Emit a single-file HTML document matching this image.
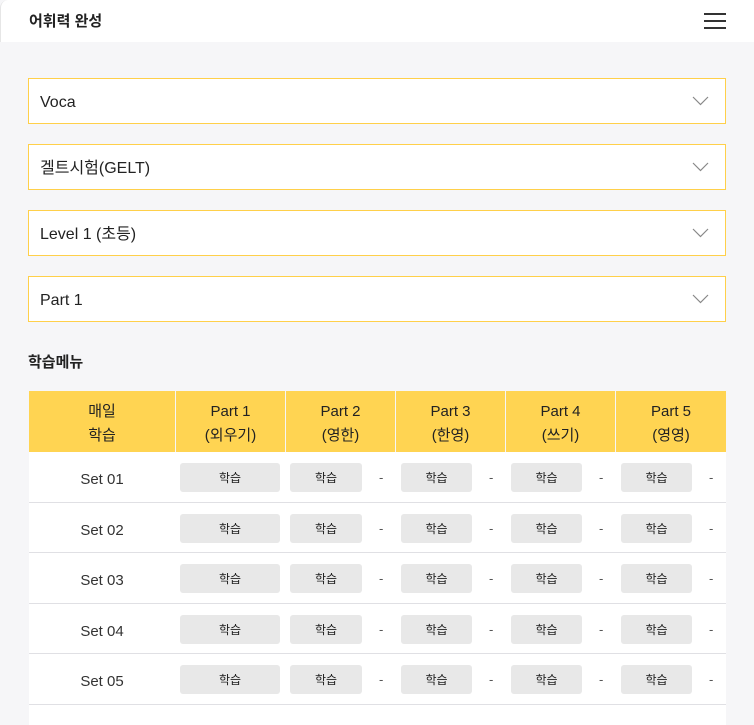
<!DOCTYPE html>
<html><head><meta charset="utf-8"><style>
*{margin:0;padding:0;box-sizing:border-box}
body{width:754px;height:711px;overflow:hidden;background:#f6f6f8;font-family:"Liberation Sans","Noto Sans CJK KR",sans-serif;color:#222;position:relative}
.hdr{position:absolute;left:0;top:0;width:754px;height:42px;background:#fff;border-left:1px solid #e6e6e6;border-top-left-radius:8px}
.hdr .t{position:absolute;left:28px;top:12px;font-size:15px;line-height:20px;font-weight:bold;color:#222}
.hb{position:absolute;left:703px;width:22px;height:2px;background:#333}
.sel{position:absolute;left:28px;width:698px;height:46px;background:#fff;border:1px solid #ffd04a}
.sel span{position:absolute;left:11px;top:14px;font-size:16px;line-height:20px;height:20px;color:#222}
.sel svg{position:absolute;right:16px;top:17px}
.lbl{position:absolute;left:28px;top:353px;font-size:15px;line-height:20px;font-weight:bold}
.th{position:absolute;top:391px;height:61px;background:#ffd452;font-size:15px;text-align:center;line-height:24px;padding-top:9px;color:#222}
.row{position:absolute;left:29px;width:697px;background:#fff;border-bottom:1px solid #e0e0e4}
.row .s{position:absolute;left:0;width:146px;top:18px;text-align:center;font-size:15px;line-height:20px;color:#333}
.b{position:absolute;top:11px;height:29px;background:#e8e8e8;border-radius:3px;font-size:12px;text-align:center;line-height:30px;color:#222}
.d{position:absolute;top:16px;font-size:13px;line-height:20px;color:#555}
</style></head><body>
<div class="hdr"><div class="t">어휘력 완성</div>
<div class="hb" style="top:13px"></div><div class="hb" style="top:20px"></div><div class="hb" style="top:27px"></div></div>

<div class="sel" style="top:78px"><span>Voca</span><svg width="17" height="10"><path d="M1 1 L8.5 8.5 L16 1" fill="none" stroke="#888" stroke-width="1.2"/></svg></div>
<div class="sel" style="top:144px"><span>겔트시험(GELT)</span><svg width="17" height="10"><path d="M1 1 L8.5 8.5 L16 1" fill="none" stroke="#888" stroke-width="1.2"/></svg></div>
<div class="sel" style="top:210px"><span>Level 1 (초등)</span><svg width="17" height="10"><path d="M1 1 L8.5 8.5 L16 1" fill="none" stroke="#888" stroke-width="1.2"/></svg></div>
<div class="sel" style="top:276px"><span>Part 1</span><svg width="17" height="10"><path d="M1 1 L8.5 8.5 L16 1" fill="none" stroke="#888" stroke-width="1.2"/></svg></div>

<div class="lbl">학습메뉴</div>

<div class="th" style="left:29px;width:146px">매일<br>학습</div>
<div class="th" style="left:176px;width:109px">Part 1<br>(외우기)</div>
<div class="th" style="left:286px;width:109px">Part 2<br>(영한)</div>
<div class="th" style="left:396px;width:109px">Part 3<br>(한영)</div>
<div class="th" style="left:506px;width:109px">Part 4<br>(쓰기)</div>
<div class="th" style="left:616px;width:110px">Part 5<br>(영영)</div>

<div class="row" style="top:452px;height:51px"><div class="s">Set 01</div><div class="b" style="left:151px;width:100px">학습</div><div class="b" style="left:261px;width:72px">학습</div><div class="d" style="left:350px">-</div><div class="b" style="left:372px;width:71px">학습</div><div class="d" style="left:460px">-</div><div class="b" style="left:482px;width:71px">학습</div><div class="d" style="left:570px">-</div><div class="b" style="left:592px;width:71px">학습</div><div class="d" style="left:680px">-</div></div>
<div class="row" style="top:503px;height:50px"><div class="s">Set 02</div><div class="b" style="left:151px;width:100px">학습</div><div class="b" style="left:261px;width:72px">학습</div><div class="d" style="left:350px">-</div><div class="b" style="left:372px;width:71px">학습</div><div class="d" style="left:460px">-</div><div class="b" style="left:482px;width:71px">학습</div><div class="d" style="left:570px">-</div><div class="b" style="left:592px;width:71px">학습</div><div class="d" style="left:680px">-</div></div>
<div class="row" style="top:553px;height:51px"><div class="s">Set 03</div><div class="b" style="left:151px;width:100px">학습</div><div class="b" style="left:261px;width:72px">학습</div><div class="d" style="left:350px">-</div><div class="b" style="left:372px;width:71px">학습</div><div class="d" style="left:460px">-</div><div class="b" style="left:482px;width:71px">학습</div><div class="d" style="left:570px">-</div><div class="b" style="left:592px;width:71px">학습</div><div class="d" style="left:680px">-</div></div>
<div class="row" style="top:604px;height:50px"><div class="s">Set 04</div><div class="b" style="left:151px;width:100px">학습</div><div class="b" style="left:261px;width:72px">학습</div><div class="d" style="left:350px">-</div><div class="b" style="left:372px;width:71px">학습</div><div class="d" style="left:460px">-</div><div class="b" style="left:482px;width:71px">학습</div><div class="d" style="left:570px">-</div><div class="b" style="left:592px;width:71px">학습</div><div class="d" style="left:680px">-</div></div>
<div class="row" style="top:654px;height:51px"><div class="s">Set 05</div><div class="b" style="left:151px;width:100px">학습</div><div class="b" style="left:261px;width:72px">학습</div><div class="d" style="left:350px">-</div><div class="b" style="left:372px;width:71px">학습</div><div class="d" style="left:460px">-</div><div class="b" style="left:482px;width:71px">학습</div><div class="d" style="left:570px">-</div><div class="b" style="left:592px;width:71px">학습</div><div class="d" style="left:680px">-</div></div>
<div class="row" style="top:705px;height:20px;border:none"></div>
</body></html>
